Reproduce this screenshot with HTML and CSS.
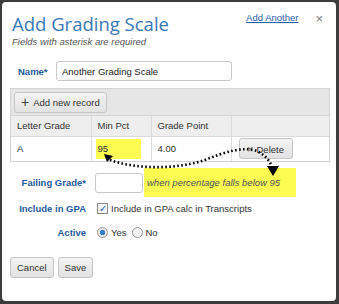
FILE: index.html
```html
<!DOCTYPE html>
<html lang="en">
<head>
  <meta charset="UTF-8" />
  <title>Add Grading Scale</title>
  <link rel="stylesheet" href="styles.css">
</head>
<body>
  <div class="dialog">
    <div class="head">
      <h1>Add Grading Scale</h1>
      <a class="add-another" href="#">Add Another</a>
      <span class="close">&times;</span>
    </div>
    <p class="hint">Fields with asterisk are required</p>

    <div class="name-row">
      <label>Name*</label>
      <input type="text" class="text name" value="Another Grading Scale">
    </div>

    <div class="panel">
      <div class="panel-bar">
        <button class="btn add"><span class="plus">+</span>Add new record</button>
      </div>
      <table>
        <tr>
          <th class="c1">Letter Grade</th>
          <th class="c2">Min Pct</th>
          <th class="c3">Grade Point</th>
          <th></th>
        </tr>
        <tr>
          <td>A</td>
          <td><span class="mark">95</span></td>
          <td>4.00</td>
          <td><button class="btn del"><span class="x">&times;</span>Delete</button></td>
        </tr>
      </table>
    </div>

    <div class="form">
      <label>Failing Grade*</label>
      <div class="ctl">
        <input type="text" class="text small">
        <span class="note">when percentage falls below 95</span>
      </div>

      <label>Include in GPA</label>
      <div class="ctl">
        <span class="check">&#10003;</span>
        <span>Include in GPA calc in Transcripts</span>
      </div>

      <label>Active</label>
      <div class="ctl">
        <span class="radio on"></span><span class="opt">Yes</span>
        <span class="radio"></span><span>No</span>
      </div>
    </div>

    <div class="actions">
      <button class="btn">Cancel</button>
      <button class="btn">Save</button>
    </div>

    <!-- callout arrow linking the failing grade note to the table cell -->
    <svg class="arrow" width="339" height="304" viewBox="0 0 339 304">
      <path d="M110,160 C135,169 175,170 205,160 C225,152 243,146 257,151 C265,155 270,161 272,167"
            fill="none" stroke="#000" stroke-width="2.6" stroke-dasharray="1.6 2.4"/>
      <polygon points="267,166 279,166 273,176" fill="#000"/>
      <polygon points="104,154 113,156 107,162" fill="#000"/>
    </svg>
  </div>
</body>
</html>
```

FILE: styles.css
```css
* {
  box-sizing: border-box;
}
body {
  margin: 0;
  width: 339px;
  height: 304px;
  background: #3c3c3c;
  padding: 2px 3px 3px 2px;
  font-family: 'Liberation Sans', Arial, sans-serif;
  font-size: 9.5px;
  color: #333;
}
.dialog {
  position: relative;
  width: 334px;
  height: 299px;
  background: #fff;
  border-radius: 4px;
  padding: 10px 6px 0 8px;
}
.head {
  display: flex;
  align-items: flex-start;
}
h1 {
  margin: 0 0 0 2px;
  font-family: 'Open Sans', sans-serif;
  font-weight: normal;
  font-size: 18.5px;
  line-height: 24px;
  color: #3b78b7;
  flex: 1;
}
.add-another {
  color: #2a5db0;
  font-size: 9.5px;
  margin-top: 0;
  line-height: 11px;
}
.close {
  color: #777;
  font-size: 13px;
  line-height: 11px;
  margin: 1px 7px 0 17px;
}
.hint {
  margin: 0 0 0 2px;
  font-style: italic;
  color: #555;
  font-size: 9.5px;
  line-height: 12px;
}
.name-row {
  display: flex;
  align-items: center;
  margin-top: 13px;
  padding-left: 8px;
}
.name-row label {
  width: 38px;
}
label {
  font-weight: bold;
  color: #1f5b9e;
}
.text {
  height: 20px;
  border: 1px solid #c8c8c8;
  border-radius: 3px;
  font: inherit;
  color: #222;
  padding: 0 5px;
}
.name {
  width: 176px;
}
.panel {
  margin-top: 7px;
  width: 320px;
  border: 1px solid #d4d4d4;
}
.panel-bar {
  height: 27px;
  background: #e6e6e6;
  padding: 3px 3px;
  border-bottom: 1px solid #d4d4d4;
}
.btn {
  font: inherit;
  color: #333;
  background: linear-gradient(#f4f4f4, #e2e2e2);
  border: 1px solid #c6c6c6;
  border-radius: 3px;
  height: 21px;
  padding: 0 6px;
  white-space: nowrap;
}
.add {
  width: 93px;
  text-align: left;
  padding-left: 6px;
}
.plus {
  font-size: 14px;
  line-height: 10px;
  margin-right: 4px;
  color: #444;
  vertical-align: -1px;
}
table {
  width: 100%;
  border-collapse: collapse;
}
th, td {
  text-align: left;
  font-weight: normal;
  padding: 0 6px;
  border-right: 1px solid #dcdcdc;
}
th:last-child, td:last-child {
  border-right: none;
}
th {
  height: 20px;
  background: #eeeeee;
  border-bottom: 1px solid #dcdcdc;
}
td {
  height: 25px;
}
.c1 { width: 80px; }
.c2 { width: 60px; }
.c3 { width: 80px; }
td .mark {
  display: inline-block;
  background: #fbfb52;
  width: 45px;
  height: 20px;
  line-height: 20px;
  padding-left: 2px;
  margin-left: -2px;
}
.del {
  margin-left: 1px;
  width: 54px;
  padding: 0 4px;
}
.x {
  color: #666;
  font-size: 11px;
  margin-right: 3px;
}
.form {
  display: grid;
  grid-template-columns: 74px 1fr;
  grid-template-rows: 29px 23px 25px;
  column-gap: 9px;
  margin-top: 6px;
  padding-left: 2px;
  align-items: center;
}
.form label {
  text-align: right;
}
.ctl {
  display: flex;
  align-items: center;
  height: 100%;
}
.small {
  width: 48px;
}
.note {
  align-self: stretch;
  display: flex;
  align-items: center;
  width: 152px;
  margin-left: 1px;
  background: #fbfb52;
  font-style: italic;
  color: #555;
  padding-left: 3px;
}
.check {
  width: 11px;
  height: 11px;
  border: 1px solid #8a8a8a;
  background: #f3f3f3;
  color: #2a5db0;
  font-size: 10px;
  line-height: 9px;
  text-align: center;
  margin: 0 3px 0 2px;
}
.radio {
  width: 11px;
  height: 11px;
  border-radius: 50%;
  border: 1px solid #999;
  background: #f2f2f2;
  margin: 0 3px 0 2px;
}
.radio.on {
  background: radial-gradient(circle, #3a7fc4 0 2.5px, #e8e8e8 3px);
}
.opt {
  margin-right: 3px;
}
.actions {
  display: flex;
  gap: 4px;
  margin-top: 12px;
}
.actions .btn {
  padding: 0 6px;
}
.arrow {
  position: absolute;
  left: -2px;
  top: -2px;
  pointer-events: none;
}
```
